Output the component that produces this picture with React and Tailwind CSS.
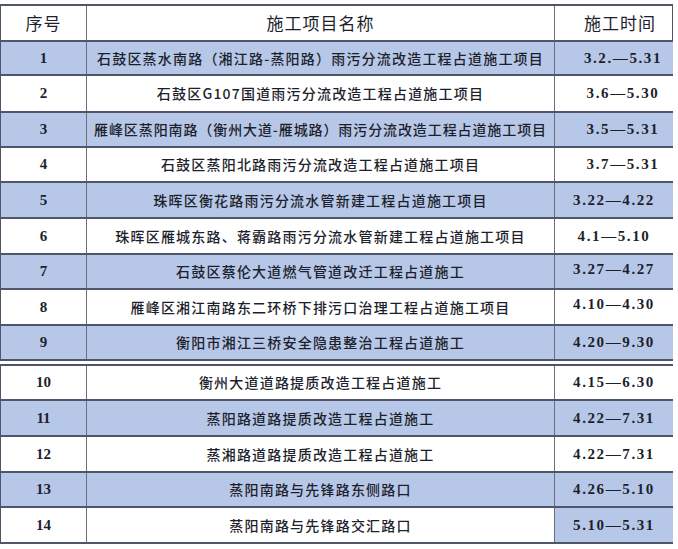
import React from "react";

const rows = [
  { no: "1", name: "石鼓区蒸水南路（湘江路-蒸阳路）雨污分流改造工程占道施工项目", time: "3.2.—5.31", h: "h-[34px]", shade: true, shift: true },
  { no: "2", name: "石鼓区G107国道雨污分流改造工程占道施工项目", time: "3.6—5.30", h: "h-[37px]", shift: true },
  { no: "3", name: "雁峰区蒸阳南路（衡州大道-雁城路）雨污分流改造工程占道施工项目", time: "3.5—5.31", h: "h-[35px]", shade: true, shift: true, tight: true },
  { no: "4", name: "石鼓区蒸阳北路雨污分流改造工程占道施工项目", time: "3.7—5.31", h: "h-[35px]", shift: true },
  { no: "5", name: "珠晖区衡花路雨污分流水管新建工程占道施工项目", time: "3.22—4.22", h: "h-[36px]", shade: true },
  { no: "6", name: "珠晖区雁城东路、蒋霸路雨污分流水管新建工程占道施工项目", time: "4.1—5.10", h: "h-[36px]" },
  { no: "7", name: "石鼓区蔡伦大道燃气管道改迁工程占道施工", time: "3.27—4.27", h: "h-[35px]", shade: true, top: true },
  { no: "8", name: "雁峰区湘江南路东二环桥下排污口治理工程占道施工项目", time: "4.10—4.30", h: "h-[36px]", top: true },
  { no: "9", name: "衡阳市湘江三桥安全隐患整治工程占道施工", time: "4.20—9.30", h: "h-[35px]", shade: true },
];

const rows2 = [
  { no: "10", name: "衡州大道道路提质改造工程占道施工", time: "4.15—6.30", h: "h-[35px]" },
  { no: "11", name: "蒸阳路道路提质改造工程占道施工", time: "4.22—7.31", h: "h-[36px]", shade: true },
  { no: "12", name: "蒸湘路道路提质改造工程占道施工", time: "4.22—7.31", h: "h-[36px]" },
  { no: "13", name: "蒸阳南路与先锋路东侧路口", time: "4.26—5.10", h: "h-[35px]", shade: true },
  { no: "14", name: "蒸阳南路与先锋路交汇路口", time: "5.10—5.31", h: "h-[36px]", timeShade: true },
];

const serif = "font-['Liberation_Serif','Noto_Sans_CJK_SC',serif]";
const cjk = "font-['Noto_Sans_CJK_SC',sans-serif]";

function Row({ r }) {
  const bg = r.shade ? "bg-[#b7c7e8]" : "bg-white";
  return (
    <div className={`grid grid-cols-[86px_468px_118px] ${r.h} border-b-2 border-[#50566a] text-[#1d1f2c]`}>
      <div className={`${bg} border-r border-[#6b6f7a] flex items-center justify-center font-bold text-[15px] ${serif}`}>
        {r.no}
      </div>
      <div
        className={`${bg} border-r border-[#6b6f7a] flex items-center justify-center whitespace-nowrap overflow-visible font-medium text-[14px] ${cjk} ${
          r.tight ? "tracking-[0.9px]" : "tracking-[1.2px]"
        }`}
      >
        {r.name}
      </div>
      <div
        className={`${r.shade || r.timeShade ? "bg-[#b7c7e8]" : "bg-white"} flex justify-center font-bold text-[15px] tracking-[1.6px] ${serif} ${
          r.top ? "items-start pt-[3px]" : "items-center"
        } ${r.shift ? "pl-[18px]" : ""}`}
      >
        {r.time}
      </div>
    </div>
  );
}

export default function App() {
  return (
    <div className="w-[678px] h-[549px] bg-white overflow-hidden">
      <div className="w-[673px] mt-[4px] border-t-2 border-l border-r border-[#50566a]">
        <div className="grid grid-cols-[86px_468px_118px] h-[36px] border-b-2 border-[#50566a] text-[#1d1f2c] text-[17px]">
          <div className={`border-r border-[#6b6f7a] flex items-center justify-center tracking-[1px] ${cjk}`}>序号</div>
          <div className={`border-r border-[#6b6f7a] flex items-center justify-center tracking-[1px] ${cjk}`}>施工项目名称</div>
          <div className={`flex items-center justify-center pl-[12px] tracking-[1px] ${cjk}`}>施工时间</div>
        </div>
        {rows.map((r) => (
          <Row key={r.no} r={r} />
        ))}
      </div>
      <div className="w-[673px] mt-[3px] border-t-2 border-l border-r border-[#50566a]">
        {rows2.map((r) => (
          <Row key={r.no} r={r} />
        ))}
      </div>
    </div>
  );
}
